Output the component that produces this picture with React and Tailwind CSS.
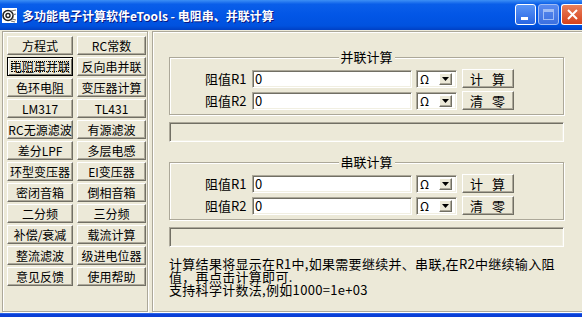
import React from 'react';

const FONT = { fontFamily: '"Noto Sans CJK SC", "Liberation Sans", sans-serif' };

const NAV_ITEMS = [
  ['方程式', 'RC常数'],
  ['电阻串并联', '反向串并联'],
  ['色环电阻', '变压器计算'],
  ['LM317', 'TL431'],
  ['RC无源滤波', '有源滤波'],
  ['差分LPF', '多层电感'],
  ['环型变压器', 'EI变压器'],
  ['密闭音箱', '倒相音箱'],
  ['二分频', '三分频'],
  ['补偿/衰减', '载流计算'],
  ['整流滤波', '级进电位器'],
  ['意见反馈', '使用帮助'],
];

const raised =
  'border border-t-white border-l-white border-b-[#716F64] border-r-[#716F64] shadow-[inset_-1px_-1px_0_#ACA899] bg-[#ECE9D8]';
const sunken =
  'border border-t-[#ACA899] border-l-[#ACA899] border-b-white border-r-white shadow-[inset_1px_1px_0_#716F64,inset_-1px_-1px_0_#F1EFE2]';
const etched = 'border border-[#ACA899] shadow-[inset_1px_1px_0_#fff,1px_1px_0_#fff]';

function TitleBar() {
  return (
    <div className="h-[30px] shrink-0 flex items-center bg-[linear-gradient(to_bottom,#3d8ff5_0%,#0a5ee9_14%,#0256e6_50%,#0052df_86%,#0040c4_100%)]">
      <div className="ml-[2px] w-[15px] h-[15px] bg-white flex items-center justify-center">
        <svg width="15" height="15" viewBox="0 0 15 15">
          <circle cx="6" cy="7.5" r="5" fill="none" stroke="#222" strokeWidth="1.6" />
          <circle cx="6" cy="7.5" r="2" fill="none" stroke="#222" strokeWidth="1.4" />
          <path d="M9 3 L14 2 M10 7 L14 6 M10 11 L14 12 M9 13 L13 14" stroke="#777" strokeWidth="1.2" />
        </svg>
      </div>
      <span className="ml-[5px] text-white font-bold text-[12px] leading-[15px] whitespace-nowrap [text-shadow:1px_1px_0_#0a1883]">
        多功能电子计算软件eTools - 电阻串、并联计算
      </span>
      <div className="ml-auto flex gap-[2px] self-start mt-[4px]">
        <div className="w-[21px] h-[21px] rounded-[3px] border border-white bg-[linear-gradient(to_bottom,#5a95f6,#2966e3)] relative">
          <div className="absolute left-[5px] bottom-[4px] w-[7px] h-[3px] bg-white" />
        </div>
        <div className="w-[21px] h-[21px] rounded-[3px] border border-[#9fbcf5] bg-[linear-gradient(to_bottom,#5a8bf0,#3b6fe0)] relative">
          <div className="absolute left-[4px] top-[4px] w-[11px] h-[11px] border border-[#9fbcf5] border-t-[3px]" />
        </div>
        <div className="w-[21px] h-[21px] rounded-l-[3px] border border-r-0 border-white bg-[linear-gradient(to_bottom,#e9805d,#d6421b)] flex items-center justify-center">
          <svg width="13" height="13" viewBox="0 0 13 13">
            <path d="M2 2 L11 11 M11 2 L2 11" stroke="#fff" strokeWidth="2" />
          </svg>
        </div>
      </div>
    </div>
  );
}

function NavButton({ label, focused }) {
  return (
    <div
      className={`relative h-[19px] flex items-center justify-center text-[12px] leading-[12px] text-black whitespace-nowrap ${
        focused ? 'border border-black shadow-[inset_1px_1px_0_#fff,inset_-1px_-1px_0_#716F64] bg-[#ECE9D8]' : raised
      }`}
    >
      {label}
      {focused && <span className="absolute inset-[3px] border border-dotted border-black" />}
    </div>
  );
}

function ResistorRow({ label, action }) {
  return (
    <div className="flex items-center h-[19px]">
      <span className="w-[82px] pl-[35px] text-[13px] leading-[13px] whitespace-nowrap">{label}</span>
      <div className={`w-[160px] h-[18px] bg-white ${sunken} pl-[2px] text-[13px] leading-[15px]`}>0</div>
      <div className={`ml-[4px] w-[41px] h-[18px] bg-white ${sunken} flex items-center`}>
        <span className="pl-[3px] w-[22px] text-[12px] leading-[12px]">Ω</span>
        <div className={`w-[13px] h-[12px] ${raised} flex items-center justify-center`}>
          <svg width="7" height="4" viewBox="0 0 7 4">
            <path d="M0 0 H7 L3.5 4 Z" fill="#000" />
          </svg>
        </div>
      </div>
      <div className={`ml-[5px] w-[52px] h-[19px] ${raised} flex items-center justify-center text-[13px] leading-[13px] whitespace-pre tracking-[1px]`}>
        {action}
      </div>
    </div>
  );
}

function GroupBox({ title }) {
  return (
    <div className={`relative w-[395px] h-[58px] ${etched} pt-[11px] flex flex-col gap-[3px]`}>
      <span className="absolute left-1/2 -translate-x-1/2 -top-[8px] px-[2px] bg-[#ECE9D8] text-[13px] leading-[14px] whitespace-nowrap">
        {title}
      </span>
      <ResistorRow label="阻值R1" action="计  算" />
      <ResistorRow label="阻值R2" action="清  零" />
    </div>
  );
}

export default function App() {
  return (
    <div className="w-[582px] h-[317px] overflow-hidden flex flex-col bg-[#ECE9D8] text-black" style={FONT}>
      <TitleBar />
      <div className="flex-1 flex gap-[4px] pl-[2px] pt-[1px] pb-[1px] min-h-0">
        <div className={`w-[146px] shrink-0 ${etched} pl-[4px] pt-[4px]`}>
          <div className="grid grid-cols-[66px_69px] gap-x-[4px] gap-y-[2px]">
            {NAV_ITEMS.map(([a, b]) => (
              <React.Fragment key={a}>
                <NavButton label={a} focused={a === '电阻串并联'} />
                <NavButton label={b} />
              </React.Fragment>
            ))}
          </div>
        </div>
        <div className={`w-[440px] shrink-0 ${etched} pl-[16px] pt-[25px]`}>
          <GroupBox title="并联计算" />
          <div className={`mt-[7px] w-[395px] h-[20px] ${sunken}`} />
          <div className="mt-[20px]">
            <GroupBox title="串联计算" />
          </div>
          <div className={`mt-[7px] w-[395px] h-[20px] ${sunken}`} />
          <p className="mt-[10px] text-[13px] leading-[13px] tracking-[0.3px] whitespace-nowrap">
            计算结果将显示在R1中,如果需要继续并、串联,在R2中继续输入阻
            <br />
            值，再点击计算即可.
            <br />
            支持科学计数法,例如1000=1e+03
          </p>
        </div>
      </div>
      <div className="h-[4px] shrink-0 bg-[#0a3fd6] border-t border-[#2a64ea]" />
    </div>
  );
}
